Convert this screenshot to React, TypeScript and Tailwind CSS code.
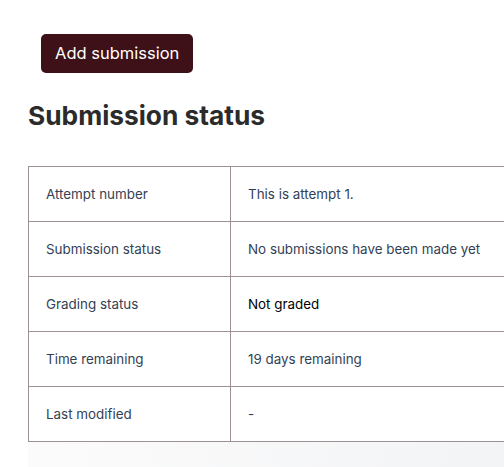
const rows: { label: string; value: string; dark?: boolean }[] = [
  { label: 'Attempt number', value: 'This is attempt 1.' },
  { label: 'Submission status', value: 'No submissions have been made yet' },
  { label: 'Grading status', value: 'Not graded', dark: true },
  { label: 'Time remaining', value: '19 days remaining' },
  { label: 'Last modified', value: '-' },
]

export default function App() {
  return (
    <div className="w-[504px] h-[467px] overflow-hidden bg-white font-['Inter',sans-serif]">
      <div className="pl-[28px]">
        <div className="pt-[34px] pl-[13px]">
          <button className="h-[39px] px-[14px] rounded-[5px] bg-[#3e1017] text-white text-[16.5px] leading-none">
            Add submission
          </button>
        </div>
        <h2 className="mt-[30px] text-[26.3px] font-bold text-[#2b2b2b] leading-none">Submission status</h2>
        <table className="mt-[37px] w-[620px] border-collapse text-[13.4px] text-[#334155]">
          <tbody>
            {rows.map((row) => (
              <tr key={row.label} className="h-[55px]">
                <td className="w-[202px] border border-[#9d9093] pl-[17px] align-middle">{row.label}</td>
                <td className={`border border-[#9d9093] pl-[17px] align-middle ${row.dark ? 'text-black' : ''}`}>
                  {row.value}
                </td>
              </tr>
            ))}
          </tbody>
        </table>
        <div className="h-[40px] bg-gradient-to-r from-[#fbfbfb] to-[#f3f4f6]"></div>
      </div>
    </div>
  )
}
